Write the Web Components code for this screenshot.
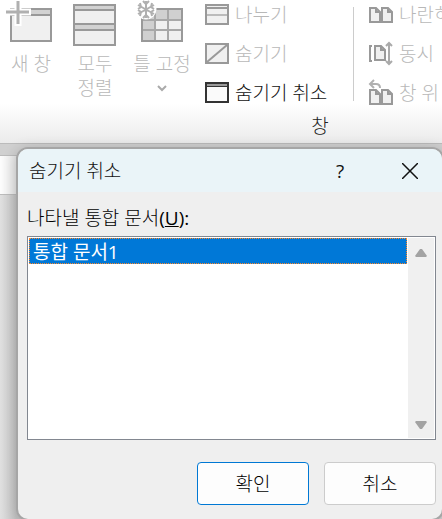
<!DOCTYPE html>
<html lang="ko">
<head>
<meta charset="utf-8">
<title>숨기기 취소</title>
<style>
html, body {
    margin: 0;
    height: 100%;
    overflow: hidden;
}

body {
    font: 300 19px/24px "Open Sans", "Noto Sans CJK KR", sans-serif;
    color: #111;
    background-color: #d4d4d4;
}
</style>
</head>
<body>
<excel-window>
    <ribbon-group label="창">
        <ribbon-tile slot="tiles" icon="newWindow" disabled>새 창</ribbon-tile>
        <ribbon-tile slot="tiles" icon="arrange" disabled>모두<br>정렬</ribbon-tile>
        <ribbon-tile slot="tiles" icon="freeze" menu disabled>틀 고정</ribbon-tile>
        <ribbon-command slot="commands" icon="split" disabled>나누기</ribbon-command>
        <ribbon-command slot="commands" icon="hide" disabled>숨기기</ribbon-command>
        <ribbon-command slot="commands" icon="unhide">숨기기 취소</ribbon-command>
        <ribbon-command slot="views" icon="sideBySide" disabled>나란히</ribbon-command>
        <ribbon-command slot="views" icon="syncScroll" disabled>동시</ribbon-command>
        <ribbon-command slot="views" icon="resetPosition" disabled>창 위</ribbon-command>
    </ribbon-group>
    <modal-dialog slot="dialog" heading="숨기기 취소">
        <list-field label="나타낼 통합 문서" key="U" items="통합 문서1"></list-field>
        <dialog-button slot="actions" primary>확인</dialog-button>
        <dialog-button slot="actions">취소</dialog-button>
    </modal-dialog>
</excel-window>

<script>
const page = `<path d="M1 1h6l4 4v10H1z" fill="#f0f0f0"/><path d="M7 1v4h4"/>`;

const icons = {
    newWindow: `<svg width="44" height="44" viewBox="0 0 44 44" fill="none">
        <path d="M2 9h40v32H2z" fill="#f0f0f0"/>
        <path d="M2 9h40v6H2z" fill="#d2d2d2"/>
        <path d="M2 9h40v32H2zM2 15h40" stroke="#999" stroke-width="2"/>
        <path d="M9 0v26M-3 12h25" stroke="#fff" stroke-width="7"/>
        <path d="M9 1v23M-3 12h23" stroke="#b0b0b0" stroke-width="3"/>
    </svg>`,
    arrange: `<svg width="44" height="44" viewBox="0 0 44 44" fill="none" stroke="#999" stroke-width="2">
        <path d="M1 5h41v40H1z" fill="#f0f0f0"/>
        <path d="M1 5h41v5H1zM1 24h41v6H1z" fill="#d2d2d2"/>
        <path d="M1 5h41v40H1z"/>
    </svg>`,
    freeze: `<svg width="44" height="44" viewBox="0 0 44 44" fill="none">
        <path d="M2 9h40v32H2z" fill="#f0f0f0"/>
        <path d="M2 9h40v11H15v21H2z" fill="#d0d0d0"/>
        <path d="M15 9v32M28 9v32M2 20h40M2 30h40" stroke="#a8a8a8" stroke-width="2"/>
        <path d="M2 9h40v32H2z" stroke="#999" stroke-width="2"/>
        <circle cx="6" cy="9" r="10.5" fill="#fff"/>
        <path d="M6 1v17M-2 5l16 9M-2 14l16-9M3 1l3 3 3-3M3 18l3-3 3 3M-2 9l3-2-1-4M14 9l-3-2 1-4M-2 10l3 2-1 4M14 10l-3 2 1 4" stroke="#b0b0b0" stroke-width="2"/>
    </svg>`,
    split: `<svg width="24" height="24" viewBox="0 0 24 24" fill="none" stroke="#999" stroke-width="2">
        <path d="M1 2h22v19H1z" fill="#f0f0f0"/><path d="M1 5h22"/><path d="M2 12h20" stroke="#bbb"/>
    </svg>`,
    hide: `<svg width="24" height="24" viewBox="0 0 24 24" fill="none" stroke="#999" stroke-width="2">
        <path d="M1 2h22v19H1z" fill="#f0f0f0"/><path d="M2 20L22 3"/>
    </svg>`,
    unhide: `<svg width="24" height="24" viewBox="0 0 24 24" fill="none" stroke="#333" stroke-width="2">
        <path d="M1 2h22v19H1z" fill="#fafafa"/><path d="M2 4h20" stroke="#999"/><path d="M2 5.5h20" stroke-width="1"/>
    </svg>`,
    sideBySide: `<svg width="24" height="24" viewBox="0 0 24 24" fill="none" stroke="#999" stroke-width="2">
        <g transform="translate(0 4)">${page}</g><g transform="translate(12 4)">${page}</g>
    </svg>`,
    syncScroll: `<svg width="24" height="24" viewBox="0 0 24 24" fill="none" stroke="#999" stroke-width="2">
        <path d="M3 4H1v15h2"/>
        <path d="M6 4h6l4 4v10H6z" fill="#f0f0f0"/><path d="M12 4v4h4"/>
        <path d="M20 1v21M17 4l3-3 3 3M17 19l3 3 3-3" stroke="#aaa"/>
    </svg>`,
    resetPosition: `<svg width="24" height="24" viewBox="0 0 24 24" fill="none" stroke="#999" stroke-width="2">
        <g transform="translate(0 8)">${page}</g><g transform="translate(12 8)">${page}</g>
        <path d="M5 -1L1 3l4 4M1 3h6q4 0 4 4" stroke="#b0b0b0"/>
    </svg>`
};

class BaseElement extends HTMLElement {

    constructor() {
        super();
        this.attachShadow({mode: "open"});
    }

    connectedCallback() {
        this.shadowRoot.innerHTML = this.render();
    }
}

class ExcelWindow extends BaseElement {
    render() {
        return `
<style>
:host {
    display: flex;
    flex-direction: column;
    position: relative;
    height: 100%;
    overflow: hidden;
    background: linear-gradient(90deg, #e0e0e0, #c4c4c4 16px, #d4d4d4);
}

.gap {
    height: 11px;
    background-color: #d0d0d0;
    border-top: solid 1px #bbb;
}

.formula-bar {
    height: 38px;
    background: linear-gradient(90deg, #fdfdfd, #e2e2e2 18px);
    border-top: solid 1px #bbb;
    border-bottom: solid 1px #bbb;
}

/* the dialog floats above the sheet and hangs over the right edge */
::slotted([slot=dialog]) {
    position: absolute;
    top: 147px;
    left: 16px;
    right: -2px;
}
</style>
<slot></slot>
<div class="gap"></div>
<div class="formula-bar"></div>
<slot name="dialog"></slot>`;
    }
}

class RibbonGroup extends BaseElement {
    render() {
        return `
<style>
:host {
    display: block;
    width: 640px;
    background: linear-gradient(#fff 104px, #ebebeb);
}

.row {
    display: flex;
    height: 112px;
}

.tiles {
    display: grid;
    grid-template-columns: 62px 66px 68px;
    width: 205px;
}

.commands, .views {
    display: flex;
    flex-direction: column;
    gap: 15px;
    padding-top: 3px;
}

.commands {
    width: 148px;
}

.views {
    padding-left: 15px;
}

.separator {
    width: 1px;
    margin: 7px 0 11px;
    background-color: #ccc;
}

.label {
    height: 31px;
    line-height: 28px;
    text-align: center;
    color: #222;
}
</style>
<div class="row">
    <div class="tiles"><slot name="tiles"></slot></div>
    <div class="commands"><slot name="commands"></slot></div>
    <div class="separator"></div>
    <div class="views"><slot name="views"></slot></div>
</div>
<div class="label">${this.getAttribute("label")}</div>`;
    }
}

class RibbonTile extends BaseElement {
    render() {
        return `
<style>
:host {
    display: block;
}

button {
    display: flex;
    flex-direction: column;
    align-items: center;
    width: 100%;
    padding: 0;
    border: none;
    background: none;
    font: inherit;
    color: #222;
}

button:disabled {
    color: #b8b8b8;
}

.icon {
    height: 52px;
}

svg {
    display: block;
    overflow: visible;
}

.chevron {
    margin-top: 8px;
}
</style>
<button ${this.hasAttribute("disabled") ? "disabled" : ""}>
    <span class="icon">${icons[this.getAttribute("icon")]}</span>
    <span><slot></slot></span>
    ${this.hasAttribute("menu") ? `<svg class="chevron" width="10" height="8" viewBox="0 0 10 8" fill="none" stroke="#aaa" stroke-width="2"><path d="M1 2l4 4 4-4"/></svg>` : ""}
</button>`;
    }
}

class RibbonCommand extends BaseElement {
    render() {
        return `
<style>
:host {
    display: block;
}

button {
    display: flex;
    align-items: center;
    gap: 6px;
    height: 24px;
    padding: 0;
    border: none;
    background: none;
    font: inherit;
    color: #111;
    white-space: nowrap;
}

button:disabled {
    color: #b8b8b8;
}

svg {
    display: block;
    overflow: visible;
}
</style>
<button ${this.hasAttribute("disabled") ? "disabled" : ""}>
    ${icons[this.getAttribute("icon")]}
    <span><slot></slot></span>
</button>`;
    }
}

class ModalDialog extends BaseElement {
    render() {
        return `
<style>
:host {
    display: block;
    box-sizing: border-box;
    border: solid 2px #a6a6a6;
    border-radius: 12px;
    overflow: hidden;
    background-color: #efefef;
    box-shadow: 0 2px 14px rgba(0, 0, 0, 0.2);
}

header {
    display: flex;
    align-items: center;
    height: 43px;
    padding: 0 8px 0 11px;
    background-color: #eaf4f8;
}

h1 {
    flex: 1;
    margin: 0;
    font: inherit;
}

header button {
    display: grid;
    place-items: center;
    width: 48px;
    height: 40px;
    padding: 0;
    border: none;
    background: none;
    font: inherit;
    font-weight: 400;
    color: #111;
}

header button + button {
    margin-left: 22px;
}

.body {
    padding: 14px 6px 14px 9px;
}

footer {
    display: flex;
    justify-content: flex-end;
    gap: 15px;
    padding-top: 22px;
}
</style>
<header>
    <h1>${this.getAttribute("heading")}</h1>
    <button>?</button>
    <button aria-label="닫기"><svg width="16" height="16" viewBox="0 0 16 16" stroke="#111" stroke-width="1.5"><path d="M0 0l16 16M16 0L0 16"/></svg></button>
</header>
<div class="body">
    <slot></slot>
    <footer><slot name="actions"></slot></footer>
</div>`;
    }
}

class ListField extends BaseElement {
    render() {
        let options = this.getAttribute("items").split(",")
            .map((item, i) => `<option ${i == 0 ? "selected" : ""}>${item}</option>`)
            .join("");

        return `
<style>
:host {
    display: block;
}

label {
    display: block;
    height: 30px;
    color: #000;
}

.key {
    font-weight: 400;
}

.box {
    display: flex;
    box-sizing: border-box;
    height: 204px;
    padding: 1px;
    border: solid 1px #828790;
    background-color: #fff;
}

select {
    flex: 1;
    min-width: 0;
    padding: 0;
    border: none;
    border-radius: 0;
    outline: none;
    appearance: none;
    overflow: hidden;
    background: none;
    font: inherit;
}

option {
    display: flex;
    align-items: center;
    box-sizing: border-box;
    height: 26px;
    min-height: 26px;
    padding: 0 3px;
    border: dotted 1px transparent;
    line-height: 24px;
}

option:checked {
    border-color: #ff8728;
    background: #0078d7 linear-gradient(#0078d7, #0078d7);
    color: #fff;
    -webkit-text-fill-color: #fff;
}

.scrollbar {
    display: flex;
    flex-direction: column;
    justify-content: space-between;
    align-items: center;
    width: 26px;
    margin-left: 1px;
    padding: 10px 0 8px;
    box-sizing: border-box;
    background-color: #f0f0f0;
}
</style>
<label for="list">${this.getAttribute("label")}<span class="key">(<u>${this.getAttribute("key")}</u>):</span></label>
<div class="box">
    <select id="list" size="7">${options}</select>
    <div class="scrollbar">
        <svg width="12" height="10" viewBox="0 0 12 10" fill="#a3a3a3"><path d="M5 1h2l5 7-1 1H1L0 8z"/></svg>
        <svg width="12" height="10" viewBox="0 0 12 10" fill="#a3a3a3"><path d="M5 9h2l5-7-1-1H1L0 2z"/></svg>
    </div>
</div>`;
    }
}

class DialogButton extends BaseElement {
    render() {
        return `
<style>
:host {
    display: block;
}

button {
    width: 112px;
    height: 43px;
    padding: 0;
    border: solid 1px #ccc;
    border-radius: 4px;
    background-color: #fdfdfd;
    font: inherit;
    color: #000;
}

:host([primary]) button {
    border-color: #0078d4;
}
</style>
<button><slot></slot></button>`;
    }
}

customElements.define("excel-window", ExcelWindow);
customElements.define("ribbon-group", RibbonGroup);
customElements.define("ribbon-tile", RibbonTile);
customElements.define("ribbon-command", RibbonCommand);
customElements.define("modal-dialog", ModalDialog);
customElements.define("list-field", ListField);
customElements.define("dialog-button", DialogButton);
</script>
</body>
</html>
